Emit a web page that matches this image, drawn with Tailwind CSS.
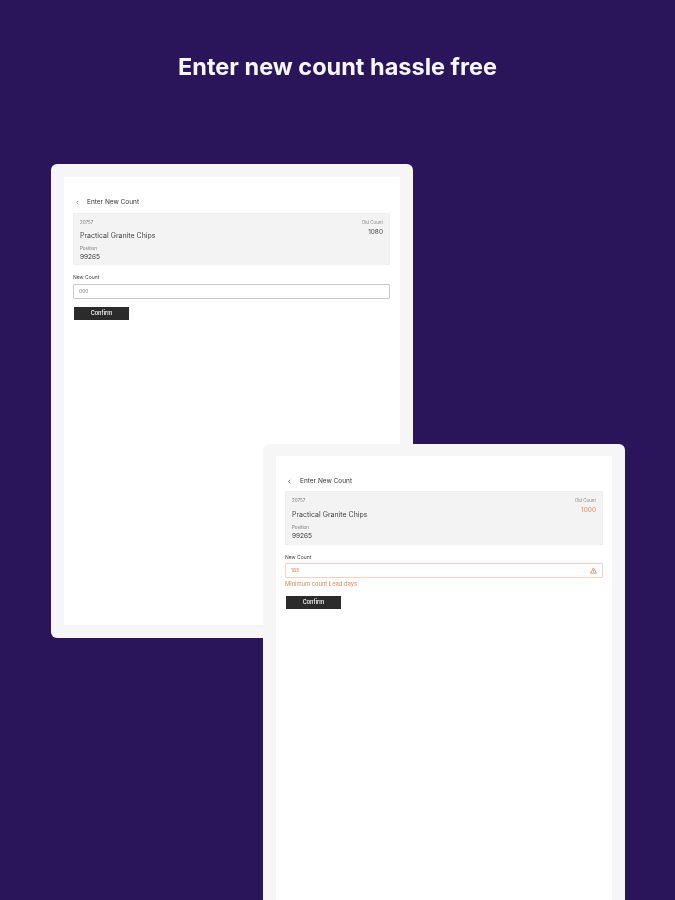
<!DOCTYPE html>
<html lang="en">
<head>
  <meta charset="UTF-8">
  <meta name="viewport" content="width=device-width, initial-scale=1.0">
  <title>Enter new count</title>
  <script src="https://cdn.jsdelivr.net/npm/@tailwindcss/browser@4"></script>
</head>
<body class="bg-[#2a145a] font-['Inter','Liberation_Sans',sans-serif]">
  <div class="relative w-[675px] h-[900px] overflow-hidden">
    <h1 class="pt-[52px] text-center text-[23.5px] leading-[30px] font-bold tracking-[0px] text-[#f6f5fa] blur-[0.4px]">Enter new count hassle free</h1>

    <!-- first tablet -->
    <div class="absolute left-[51px] top-[164px] w-[362px] h-[474px] rounded-[6px] bg-[#f5f6f5] p-[13px]">
      <div class="h-full bg-white px-[9px] pt-[19px]">
        <div class="blur-[0.4px]">
          <div class="flex items-center h-[12px] pl-[2px] gap-[7px] text-[6.5px] leading-[14px] text-[#333]">
            <svg class="w-[5px] h-[5px]" viewBox="0 0 6 6" fill="none" stroke="#777" stroke-width="1"><path d="M4 1 2 3l2 2"/></svg>
            <span>Enter New Count</span>
          </div>
          <div class="mt-[5px] flex justify-between h-[52px] w-[317px] bg-[#f3f3f3] border border-[#efefef] px-[6px] pt-[6px]">
            <div class="flex flex-col">
              <span class="text-[4.5px] leading-[6px] text-[#777]">20757</span>
              <span class="mt-[5px] text-[7px] leading-[9px] text-[#444]">Practical Granite Chips</span>
              <span class="mt-[6px] text-[4.5px] leading-[6px] text-[#777]">Position</span>
              <span class="mt-[1px] text-[6.5px] leading-[9px] text-[#333]">99265</span>
            </div>
            <div class="flex flex-col items-end">
              <span class="text-[4.5px] leading-[6px] text-[#888]">Old Count</span>
              <span class="mt-[2px] text-[6.5px] leading-[9px] text-[#444]">1080</span>
            </div>
          </div>
          <div class="mt-[9px] text-[5px] leading-[7px] text-[#444]">New Count</div>
          <div class="mt-[3px] flex items-center h-[15px] w-[317px] bg-white border border-[#c9c9c9] rounded-[1px] px-[5px] text-[5px] text-[#777]">000</div>
          <button class="mt-[8px] ml-[1px] block w-[55px] h-[13px] bg-[#2b2b2b] text-[5.5px] font-semibold text-[#eee]">Confirm</button>
        </div>
      </div>
    </div>

    <!-- second tablet -->
    <div class="absolute left-[263px] top-[444px] w-[362px] h-[480px] rounded-[6px] bg-[#f5f6f5] p-[13px] pt-[12px]">
      <div class="h-full bg-white px-[9px] pt-[19px]">
        <div class="blur-[0.4px]">
          <div class="flex items-center h-[12px] pl-[2px] gap-[8px] text-[6.5px] leading-[14px] text-[#333]">
            <svg class="w-[5px] h-[5px]" viewBox="0 0 6 6" fill="none" stroke="#555" stroke-width="1"><path d="M4 1 2 3l2 2"/></svg>
            <span>Enter New Count</span>
          </div>
          <div class="mt-[4px] flex justify-between h-[54px] w-[318px] bg-[#f3f3f3] border border-[#efefef] px-[6px] pt-[6px]">
            <div class="flex flex-col">
              <span class="text-[4.5px] leading-[6px] text-[#777]">20757</span>
              <span class="mt-[6px] text-[7px] leading-[9px] text-[#444]">Practical Granite Chips</span>
              <span class="mt-[6px] text-[4.5px] leading-[6px] text-[#777]">Position</span>
              <span class="mt-[1px] text-[6.5px] leading-[9px] text-[#333]">99265</span>
            </div>
            <div class="flex flex-col items-end">
              <span class="text-[4.5px] leading-[6px] text-[#888]">Old Count</span>
              <span class="mt-[2px] text-[6.5px] leading-[9px] text-[#e08a5e]">1000</span>
            </div>
          </div>
          <div class="mt-[9px] text-[5px] leading-[7px] text-[#444]">New Count</div>
          <div class="mt-[2px] flex items-center justify-between h-[15px] w-[318px] bg-white border border-[#f6d2c4] rounded-[1px] px-[5px] text-[5px] text-[#e08a5e]">
            <span>185</span>
            <svg class="w-[7px] h-[7px]" viewBox="0 0 8 8" fill="none" stroke="#d98a63" stroke-width="1"><path d="M4 1 7.4 7H.6Z"/><path d="M4 3.2v2"/></svg>
          </div>
          <div class="mt-[2px] text-[5.8px] leading-[7px] text-[#e08a5e]">Minimum count Lead days</div>
          <button class="mt-[9px] ml-[1px] block w-[55px] h-[13px] bg-[#2b2b2b] text-[5.5px] font-semibold text-[#eee]">Confirm</button>
        </div>
      </div>
    </div>
  </div>
</body>
</html>
